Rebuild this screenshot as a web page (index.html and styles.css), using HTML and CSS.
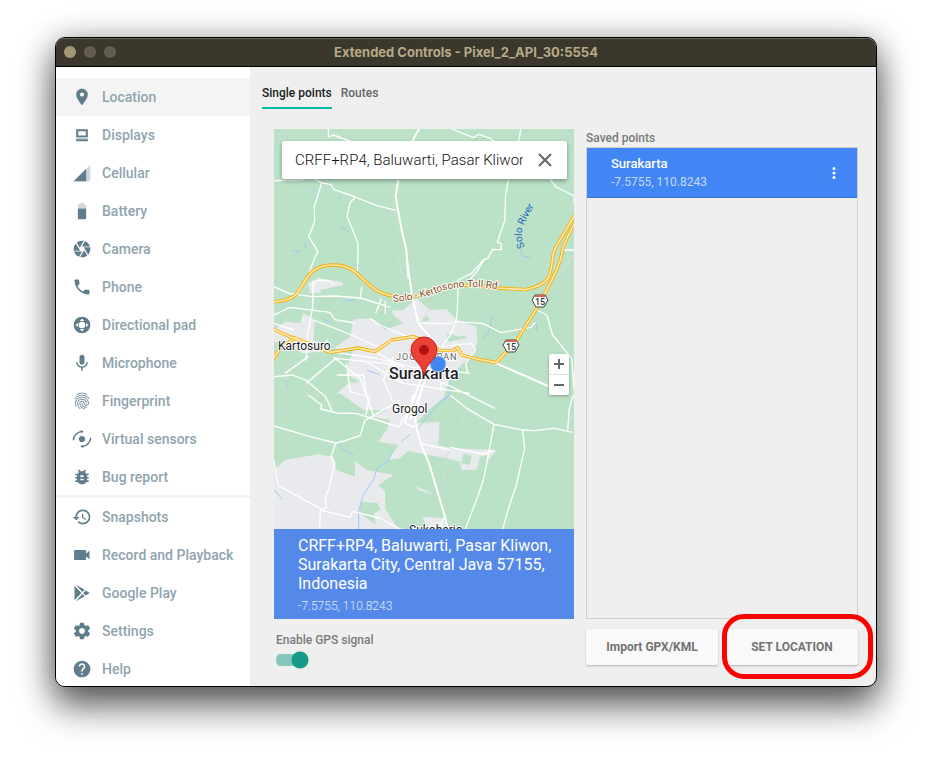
FILE: index.html
```html
<!DOCTYPE html>
<html lang="en">
<head>
<meta charset="utf-8">
<meta name="viewport" content="width=device-width, initial-scale=1">
<title>Extended Controls</title>
<link rel="stylesheet" href="styles.css">
</head>
<body>
<div class="window">
  <header class="titlebar">
    <span class="lights"><i class="light light-close"></i><i class="light"></i><i class="light"></i></span>
    <h1>Extended Controls - Pixel_2_API_30:5554</h1>
  </header>
  <div class="content">
    <nav class="sidebar">
      <ul>
        <li><a class="active" href="#"><svg viewBox="0 0 24 24"><path d="M12 2C8.13 2 5 5.13 5 9c0 5.25 7 13 7 13s7-7.75 7-13c0-3.87-3.13-7-7-7zm0 9.5c-1.38 0-2.5-1.12-2.5-2.5s1.12-2.5 2.5-2.5 2.5 1.12 2.5 2.5-1.12 2.5-2.5 2.5z"/></svg>Location</a></li>
        <li><a href="#"><svg viewBox="0 0 24 24"><path d="M5 5h14v9.500H5zM7.500 7.500v5h9v-5z" fill-rule="evenodd"/><path d="M5 14.500h14V17H5z" opacity=".4"/><path d="M5 17h14v2.500H5z"/></svg>Displays</a></li>
        <li><a href="#"><svg viewBox="0 0 24 24"><path d="M2 22h20V2z" opacity=".3"/><path d="M17 7L2 22h15z"/></svg>Cellular</a></li>
        <li><a href="#"><svg viewBox="0 0 24 24"><path d="M17 5.330C17 4.600 16.400 4 15.670 4H14V2h-4v2H8.330C7.600 4 7 4.600 7 5.330V9h10z" opacity=".3"/><path d="M7 9v11.670C7 21.400 7.600 22 8.330 22h7.330c.740 0 1.340-.600 1.340-1.330V9z"/></svg>Battery</a></li>
        <li><a href="#"><svg viewBox="0 0 24 24"><path d="M9.400 10.500l4.770-8.260C13.470 2.090 12.750 2 12 2c-2.400 0-4.600.850-6.320 2.250l3.660 6.350.060-.100zM21.540 9c-.920-2.920-3.150-5.260-6-6.340L11.880 9h9.660zm.260 1h-7.490l.290.500 4.760 8.250C21 16.970 22 14.610 22 12c0-.690-.070-1.350-.200-2zM8.540 12l-3.900-6.750C3.010 7.030 2 9.390 2 12c0 .690.070 1.350.200 2h7.490l-1.150-2zm-6.080 3c.920 2.920 3.150 5.260 6 6.340L12.120 15H2.460zm11.270 0l-3.900 6.760c.700.150 1.420.240 2.170.240 2.400 0 4.600-.850 6.320-2.250l-3.660-6.350-.930 1.600z"/></svg>Camera</a></li>
        <li><a href="#"><svg viewBox="0 0 24 24"><path d="M6.620 10.790c1.440 2.830 3.760 5.140 6.590 6.590l2.200-2.200c.270-.270.670-.360 1.020-.240 1.120.370 2.330.570 3.570.570.550 0 1 .450 1 1V20c0 .550-.450 1-1 1-9.390 0-17-7.610-17-17 0-.550.450-1 1-1h3.500c.550 0 1 .450 1 1 0 1.250.200 2.450.570 3.570.110.350.030.740-.250 1.020l-2.200 2.200z"/></svg>Phone</a></li>
        <li><a href="#"><svg viewBox="0 0 24 24"><path fill-rule="evenodd" d="M12 2a10 10 0 1 0 0 20 10 10 0 0 0 0-20zm0 2.200l2.500 3h-5zM4.200 12l3-2.500v5zM19.800 12l-3 2.500v-5zM12 19.800l-2.500-3h5zM12 8a4 4 0 1 1 0 8 4 4 0 0 1 0-8z"/></svg>Directional pad</a></li>
        <li><a href="#"><svg viewBox="0 0 24 24"><path d="M12 14c1.660 0 2.990-1.340 2.990-3L15 5c0-1.660-1.340-3-3-3S9 3.340 9 5v6c0 1.660 1.340 3 3 3zm5.300-3c0 3-2.540 5.100-5.300 5.100S6.700 14 6.700 11H5c0 3.410 2.720 6.230 6 6.720V21h2v-3.280c3.280-.480 6-3.300 6-6.720h-1.700z"/></svg>Microphone</a></li>
        <li><a href="#"><svg viewBox="0 0 24 24"><path d="M17.81 4.47c-.08 0-.16-.02-.23-.06C15.66 3.42 14 3 12.01 3c-1.98 0-3.86.47-5.57 1.41-.24.13-.54.04-.68-.2-.13-.24-.04-.55.2-.68C7.82 2.52 9.86 2 12.01 2c2.13 0 3.99.47 6.03 1.52.25.13.34.43.21.67-.09.18-.26.28-.44.28zM3.5 9.72c-.1 0-.2-.03-.29-.09-.23-.16-.28-.47-.12-.7.99-1.4 2.25-2.5 3.75-3.27C9.98 4.04 14 4.03 17.15 5.65c1.5.77 2.76 1.86 3.75 3.25.16.22.11.54-.12.7-.23.16-.54.11-.7-.12-.9-1.26-2.04-2.25-3.39-2.94-2.87-1.47-6.54-1.47-9.4.01-1.36.7-2.5 1.7-3.4 2.96-.08.14-.23.21-.39.21zm6.25 12.07c-.13 0-.26-.05-.35-.15-.87-.87-1.34-1.43-2.01-2.64-.69-1.23-1.05-2.73-1.05-4.34 0-2.97 2.54-5.39 5.66-5.39s5.66 2.42 5.66 5.39c0 .28-.22.5-.5.5s-.5-.22-.5-.5c0-2.42-2.09-4.39-4.66-4.39-2.57 0-4.66 1.97-4.66 4.39 0 1.44.32 2.77.93 3.85.64 1.15 1.08 1.64 1.85 2.42.19.2.19.51 0 .71-.11.1-.24.15-.37.15zm7.17-1.85c-1.19 0-2.24-.3-3.1-.89-1.49-1.01-2.38-2.65-2.38-4.39 0-.28.22-.5.5-.5s.5.22.5.5c0 1.41.72 2.74 1.94 3.56.71.48 1.54.71 2.54.71.24 0 .64-.03 1.04-.1.27-.05.53.13.58.41.05.27-.13.53-.41.58-.57.11-1.07.12-1.21.12zM14.91 22c-.04 0-.09-.01-.13-.02-1.59-.44-2.63-1.03-3.72-2.1-1.4-1.39-2.17-3.24-2.17-5.22 0-1.62 1.38-2.94 3.08-2.94 1.7 0 3.08 1.32 3.08 2.94 0 1.07.93 1.94 2.08 1.94s2.08-.87 2.08-1.94c0-3.77-3.25-6.83-7.25-6.83-2.84 0-5.44 1.58-6.61 4.03-.39.81-.59 1.76-.59 2.8 0 .78.07 2.01.67 3.61.1.26-.03.55-.29.64-.26.1-.55-.04-.64-.29-.49-1.31-.73-2.61-.73-3.96 0-1.2.23-2.29.68-3.24 1.33-2.79 4.28-4.6 7.51-4.6 4.55 0 8.25 3.51 8.25 7.83 0 1.62-1.38 2.94-3.08 2.94s-3.08-1.32-3.08-2.94c0-1.07-.93-1.94-2.08-1.94s-2.08.87-2.08 1.94c0 1.71.66 3.31 1.87 4.51.95.94 1.86 1.46 3.27 1.85.27.07.42.35.35.61-.05.23-.26.38-.47.38z"/></svg>Fingerprint</a></li>
        <li><a href="#"><svg viewBox="0 0 24 24"><circle cx="12" cy="12" r="3.700"/><path d="M1.500 13.500C2 8 6 3.500 12 3M22.500 10.500C22 16 18 20.500 12 21" fill="none" stroke="currentColor" stroke-width="1.800"/><path d="M10 1.500l4 1-2 2.700zM14 22.500l-4-1 2-2.700z"/></svg>Virtual sensors</a></li>
        <li><a href="#"><svg viewBox="0 0 24 24"><path d="M20 8h-2.810c-.450-.780-1.070-1.450-1.820-1.960L17 4.410 15.590 3l-2.170 2.170C12.960 5.060 12.490 5 12 5c-.490 0-.960.060-1.410.170L8.410 3 7 4.410l1.620 1.630C7.880 6.550 7.260 7.220 6.810 8H4v2h2.090c-.050.330-.090.660-.090 1v1H4v2h2v1c0 .340.040.670.090 1H4v2h2.810c1.040 1.790 2.970 3 5.190 3s4.150-1.210 5.190-3H20v-2h-2.090c.050-.330.090-.660.090-1v-1h2v-2h-2v-1c0-.340-.040-.670-.090-1H20V8zm-6 8h-4v-2h4v2zm0-4h-4v-2h4v2z"/></svg>Bug report</a></li>
      </ul>
      <ul class="secondary">
        <li><a href="#"><svg viewBox="0 0 24 24"><path d="M13 3c-4.970 0-9 4.030-9 9H1l3.890 3.890.070.140L9 12H6c0-3.870 3.130-7 7-7s7 3.130 7 7-3.130 7-7 7c-1.930 0-3.680-.790-4.940-2.060l-1.420 1.420C8.270 19.990 10.510 21 13 21c4.970 0 9-4.030 9-9s-4.030-9-9-9zm-1 5v5l4.280 2.540.720-1.210-3.500-2.080V8H12z"/></svg>Snapshots</a></li>
        <li><a href="#"><svg viewBox="0 0 24 24"><path d="M17 10.500V7c0-.550-.450-1-1-1H3.500c-.550 0-1 .450-1 1v10c0 .550.450 1 1 1H16c.550 0 1-.450 1-1v-3.500l4 4v-11z"/></svg>Record and Playback</a></li>
        <li><a href="#"><svg viewBox="0 0 24 24"><path d="M3 3.200v17.600L11.300 12zM4.500 2.200l8 8.700 2.700-2.700zM4.500 21.800l8-8.700 2.700 2.700zM16.300 9L13.400 12l2.900 3 5-2.900z"/></svg>Google Play</a></li>
        <li><a href="#"><svg viewBox="0 0 24 24"><path d="M19.430 12.980c.040-.320.070-.640.070-.980s-.030-.660-.070-.980l2.110-1.650c.190-.150.240-.420.120-.640l-2-3.460c-.120-.220-.390-.300-.610-.220l-2.490 1c-.520-.400-1.080-.730-1.690-.980l-.380-2.650C14.460 2.180 14.250 2 14 2h-4c-.250 0-.460.180-.490.420l-.380 2.650c-.610.250-1.170.590-1.690.980l-2.490-1c-.230-.090-.490 0-.610.220l-2 3.460c-.130.220-.070.490.120.640l2.110 1.650c-.040.320-.070.650-.070.980s.030.660.070.980l-2.110 1.650c-.190.150-.240.420-.120.640l2 3.460c.120.220.390.300.610.220l2.490-1c.520.400 1.080.730 1.690.980l.380 2.650c.030.240.240.420.490.420h4c.250 0 .460-.180.490-.420l.380-2.650c.610-.250 1.170-.590 1.690-.980l2.490 1c.230.090.490 0 .610-.220l2-3.460c.120-.220.070-.490-.120-.640l-2.110-1.650zM12 15.500c-1.930 0-3.500-1.570-3.500-3.500s1.570-3.500 3.500-3.500 3.500 1.570 3.500 3.500-1.570 3.500-3.500 3.500z"/></svg>Settings</a></li>
        <li><a href="#"><svg viewBox="0 0 24 24"><path d="M12 2C6.480 2 2 6.480 2 12s4.480 10 10 10 10-4.480 10-10S17.520 2 12 2zm1 17h-2v-2h2v2zm2.070-7.750l-.900.920C13.450 12.900 13 13.500 13 15h-2v-.500c0-1.100.450-2.100 1.170-2.830l1.240-1.260c.370-.360.590-.860.590-1.410 0-1.100-.900-2-2-2s-2 .900-2 2H8c0-2.210 1.790-4 4-4s4 1.790 4 4c0 .880-.360 1.680-.930 2.250z"/></svg>Help</a></li>
      </ul>
    </nav>
    <main>
      <div class="tabs" role="tablist">
        <button class="tab selected" type="button" role="tab" aria-selected="true">Single points</button>
        <button class="tab" type="button" role="tab" aria-selected="false">Routes</button>
      </div>
      <div class="columns">
        <section class="left">
          <div class="map">
            <svg class="map-art" viewBox="0 0 300 400" preserveAspectRatio="xMidYMid slice">
              <defs>
                <path id="toll-line" d="M119 173Q145 171 165 163Q190 153 240 163"/>
                <path id="river-line" d="M251 118C243 103 250 92 268 66"/>
                <path id="toll" d="M0 126Q50 125 75 107Q90 90 110 54Q135 15 190 15Q230 14 260 39Q290 70 315 88Q360 118 440 108Q520 85 560 75Q620 75 680 84L765 89Q820 78 836 52Q845 25 850-20L858-40L915-135"/>
                <path id="toll-east" d="M679 308L742 238L800 145L830 90L858 34L871 0L880-40Q895-80 920-118"/>
                <path id="route" d="M0 203L60 230L90 240L180 277L265 264L315 275L365 240L430 230L480 250L510 271L550 272L563 263L575 285L620 297L679 308"/>
                <path id="spur" d="M5 305Q25 270 40 257L80 232"/>
              </defs>
              <path class="green" d="M0 0h300v400H0z"/>
              <g transform="scale(.333333)">
                <g class="town">
                  <path transform="translate(-12 393)" d="M365 152L400 150L440 115L480 150L530 148L560 180L620 200L622 250L600 290L560 330L530 380L520 410L440 420L440 450L280 450L210 400L200 400L235 370L270 365L235 345L235 315L250 270L190 265L240 230L250 178L305 174L345 210L400 190L370 165ZM12 210L45 185L90 190L100 160L135 180L130 240L180 265L160 275L95 280L60 255L12 245ZM115 70L145 55L215 65L220 75L150 90L155 98L120 98Z"/>
                  <path transform="translate(-12 798)" d="M180 0L310 0L315 20L370 8L430 0L530 0L470 50L438 85L508 80L505 150L545 160L680 165L655 195L650 180L630 185L620 225L575 225L570 200L530 190L415 168L390 190L355 195L385 150L325 140L350 105L360 75L305 65L370 38L365 15L300 0ZM12 225L45 195L145 178L190 185L200 225L255 245L255 198L290 225L370 240L325 270L345 290L345 340L380 395L410 405L12 405ZM440 273L495 300L445 285ZM455 365L520 370L530 405L480 405Z"/>
                </g>
                <g class="green">
                  <path transform="translate(-12 393)" d="M458 173l17-5 3 14-17 3zM530 220l40 10 15-5 5 10-55 10z"/>
                  <path transform="translate(-12 798)" d="M580 175l25 7-5 28-25-5zM272 320l50 4 10 20-20 10 5 35-48-35z"/>
                </g>
                <g class="water">
                  <path transform="translate(-12 -12)" d="M127 192l25 18M215 210l-6 14M208 302l28 20M68 377l25 2M108 356l-4 15M755 370l-3 10 5 12 25 6M255 420h20"/>
                  <path transform="translate(-12 393)" d="M158 177l30 12M220 121h35M800 190v22M665 168l-5 40-20 30M570 330l-30 25-2 50-15 15M43 360l12 22M290 330l40 15"/>
                  <path transform="translate(-12 798)" d="M540 0l-28 20-70 82M420 118l-25 22M370 163l-18 38-30 18-12 35-30 45-14 50v60M200 132l20 33 32 16M14 285l22 28"/>
                </g>
                <g class="minor">
                  <path transform="translate(-12 -12)" d="M380 260l2 130 20 70M915 385l-45 70"/>
                  <path transform="translate(-12 393)" d="M915-20L790 140M500 110l-45 75M80 400l150-130"/>
                  <path transform="translate(-12 798)" d="M12 68L115-2M540 0l52 40-60 140-18 110"/>
                </g>
                <g class="street">
                  <path transform="translate(-12 -12)" d="M174 0l2 36 14-6 60 22M545 12l65 26 16-10 35 12 40 30M752 12l-12 80-25 75-8 40-3 80-22 65 12 4v18l-26-1-15 28-10 1-20 35-25 28M12 167l80-2 60-20M130 160l25 14-22 70 1 45-18 46 28 45-10 18-15 42M155 174l28 5 8 14 65 23 65 26 57 14M256 216l-16 18-9 39 33 82-1 84M840 162l18 24 54 26v20M882 375h40"/>
                  <path transform="translate(-12 393)" d="M12 80l45 20 70 10 70-2 75 6 90 28M60 142L12 165M60 142l120 15 15 22 60 10M130 62l-2 80-15 80-5 80M125 75l20-15 40 4 5 12M335 115l-18 45M346 122v40M275 80l-4 34M130 180l115 45 90 40M12 190l60 20M640 0l-35 40-40 20-3 90-4 35M558 185l80 5 55 28 90-16 12-15M558 185l-20 45-23 30 90-10 12 20-30 40 5 28M447 190l95 1 15-8M300 175l30 20 90 38M175 240l-30 25M180 275l140 20 125 30M12 350l55-5 40 15 60 50 20 45M45 340l70-50M108 370l90-75 190 20M190 290l80 65 40 110M230 310l10 85 55 15M200 345h80l10 60M280 300l120 70 200 30M370 290l-30 70 40 90M315 275l100 55M440 320l160 20M460 340l95 45 120 60M505 310l10 80M800 150l30 15 18 60 57 70 8 100"/>
                  <path transform="translate(-12 798)" d="M115 0l40 30-3 12 50 12 60 2 30 10 95 30 10-18 20-35M300 0l-12 60M12 93l105 31 80 20 25-6 48-16 15-46 105-60M197 144l-15 45 12 13-15 70-14 40 5 25-20 7M12 196l12 75 127 70-2 55M151 345l90 22 7-18 80 20 65 35M430 0l-8 45M540 0l50 40 82 48 86 17 35 2 60-7 55 12M910 0l-12 40-5 65M672 88l-30 160-20 60-40 105M758 105l6 55-25 110-25 75-18 65M450 145l90 20M540 157l100 20 30-10M525 360l-15 40"/>
                </g>
                <g class="road">
                  <path transform="translate(-12 -12)" d="M448 10l-22 40M385 165l-8 50 6 35 12 65 14 60 6 85"/>
                  <path transform="translate(-12 393)" d="M410-10l5 40 12 80 18 80 65 75M679 310l155 68M470 350l-50 130M455 350l-35 100"/>
                  <path transform="translate(-12 798)" d="M455-20l-20 90 5 30 12 45 25 60 45 150 15 60M430 0l-25 85 30 12"/>
                </g>
                <g transform="translate(-12 393)">
                  <g class="casing"><use href="#route"/><use href="#spur"/><use href="#toll"/><use href="#toll-east"/></g>
                  <g class="core"><use href="#route"/><use href="#spur"/><use href="#toll"/><use href="#toll-east"/></g>
                </g>
              </g>
              <g class="shield">
                <path d="M261 166h10l3 5-4 7h-8l-4-7z"/><path class="shield-top" d="M261 166h10v2h-10z"/>
                <path d="M232 211h10l3 5-4 7h-8l-4-7z"/><path class="shield-top" d="M232 211h10v2h-10z"/>
              </g>
              <text class="shield-no" x="266" y="176">15</text>
              <text class="shield-no" x="237" y="221">15</text>
              <text class="toll-name"><textPath href="#toll-line">Solo - Kertosono Toll Rd</textPath></text>
              <text class="river-name"><textPath href="#river-line">Solo River</textPath></text>
              <text class="place" x="4" y="221">Kartosuro</text>
              <text class="place" x="118" y="284">Grogol</text>
              <text class="place" x="135" y="405">Sukoharjo</text>
              <text class="district" x="122" y="231">JOGOSURAN</text>
              <text class="city" x="115" y="250">Surakarta</text>
              <circle cx="164" cy="235" r="8" fill="#4285f4" stroke="#b9d0f2" stroke-width="1"/>
              <path d="M150 208a13 13 0 0 1 13 13c0 10-11 13-12 23q-1 3-2 0c-1-10-12-13-12-23a13 13 0 0 1 13-13z" fill="#ea4335" stroke="#c5221f" stroke-width="1"/>
              <circle cx="150" cy="221" r="5" fill="#b31412"/>
            </svg>
            <div class="search">
              <input type="text" aria-label="Search location" value="CRFF+RP4, Baluwarti, Pasar Kliwon, Surakarta City">
              <button type="button" aria-label="Clear"><svg viewBox="0 0 14 14"><path d="M1 1l12 12M13 1L1 13"/></svg></button>
            </div>
            <div class="zoom">
              <button type="button" aria-label="Zoom in"><svg viewBox="0 0 10 10"><path d="M0 5h10M5 0v10"/></svg></button>
              <button type="button" aria-label="Zoom out"><svg viewBox="0 0 10 10"><path d="M0 5h10"/></svg></button>
            </div>
          </div>
          <div class="address">
            <p>CRFF+RP4, Baluwarti, Pasar Kliwon, Surakarta City, Central Java 57155, Indonesia</p>
            <small>-7.5755, 110.8243</small>
          </div>
          <div class="gps">
            <label for="gps">Enable GPS signal</label>
            <input id="gps" type="checkbox" role="switch" checked>
          </div>
        </section>
        <section class="right">
          <h2>Saved points</h2>
          <ul class="points">
            <li>
              <div><strong>Surakarta</strong><span>-7.5755, 110.8243</span></div>
              <button type="button" aria-label="More"><svg viewBox="0 0 4 14"><circle cx="2" cy="2.500" r="1.500"/><circle cx="2" cy="7" r="1.500"/><circle cx="2" cy="11.500" r="1.500"/></svg></button>
            </li>
          </ul>
          <div class="actions">
            <button type="button">Import GPX/KML</button>
            <div class="marked"><button type="button">SET LOCATION</button></div>
          </div>
        </section>
      </div>
    </main>
  </div>
</div>
</body>
</html>
```
FILE: styles.css
```css
* { box-sizing: border-box; }
body {
  margin: 0;
  padding: 37px 55px 73px;
  background: #fff;
  font-family: Roboto, "Liberation Sans", sans-serif;
}
h1, h2, p, ul { margin: 0; padding: 0; }
ul { list-style: none; }
button { padding: 0; border: 0; background: none; font: inherit; color: inherit; }
svg { display: block; }

.window {
  display: flex;
  flex-direction: column;
  min-height: calc(100vh - 110px);
  border: 1px solid #000;
  border-radius: 10px;
  background: #efefef;
  overflow: hidden;
  box-shadow: 0 20px 36px rgba(0, 0, 0, .55), 0 4px 32px rgba(0, 0, 0, .35);
}
.titlebar {
  display: grid;
  grid-template-columns: 60px 1fr 60px;
  align-items: center;
  height: 29px;
  padding: 0 8px;
  background: #3c372c;
  border-bottom: 1px solid #000;
  box-shadow: inset 0 1px #686359;
}
.titlebar h1 {
  font: 700 13px/16px Inter, "Liberation Sans", sans-serif;
  text-align: center;
  color: #b6aa88;
}
.lights { display: flex; gap: 8px; }
.light { width: 12px; height: 12px; border-radius: 50%; background: #625c4e; }
.light-close { background: #a39775; }

.content { display: flex; flex: 1; }
.sidebar {
  flex: 0 0 194px;
  padding-top: 11px;
  background: #fff;
  overflow: hidden;
}
.sidebar a {
  display: flex;
  align-items: center;
  gap: 10px;
  height: 38px;
  padding-left: 16px;
  font-size: 14px;
  font-weight: 500;
  color: #90a4ae;
  text-decoration: none;
}
.sidebar a.active { background: #f4f4f4; }
.sidebar svg { width: 20px; height: 20px; color: #607d8b; fill: currentColor; }
.secondary { margin: -1px 0 -2px; border-top: 3px solid #f3f3f3; }

main { flex: 1; display: flex; flex-direction: column; min-width: 0; padding: 11px 18px 16px 12px; }
.tabs { display: flex; gap: 9px; }
.tab {
  height: 31px;
  border-bottom: 2px solid transparent;
  font-size: 12px;
  font-weight: 500;
  color: #666;
}
.tab.selected { color: #212121; border-color: #00bfa5; }
.columns {
  flex: 1;
  display: grid;
  grid-template-columns: 300fr 272fr;
  gap: 12px;
  padding: 20px 0 0 12px;
}
.left, .right { display: flex; flex-direction: column; min-width: 0; }

.map { position: relative; flex: 1 0 400px; overflow: hidden; }
.map-art { position: absolute; width: 100%; height: 100%; }
.green { fill: #bbe2c6; }
.town { fill: #e8eaed; }
.water, .minor, .street, .road, .casing, .core { fill: none; stroke-linejoin: round; }
.water { stroke: #a3c8f5; stroke-width: 3; }
.minor { stroke: #d5dcd8; stroke-width: 3; }
.street { stroke: #fff; stroke-width: 4; }
.road { stroke: #fff; stroke-width: 6; }
.casing { stroke: #f9ab00; stroke-width: 10; }
.core { stroke: #fee9ae; stroke-width: 5; }
.shield path { fill: #fff; stroke: #444; stroke-width: 1; }
.shield .shield-top { fill: #e06055; stroke: none; }
.shield-no { font-size: 9px; font-weight: 500; text-anchor: middle; fill: #333; }
.place, .city, .district, .toll-name, .river-name { paint-order: stroke; stroke: #fff; stroke-width: 2px; stroke-linejoin: round; }
.place { font-size: 12px; fill: #202124; }
.city { font-size: 16px; font-weight: 500; fill: #202124; }
.district { font-size: 9px; letter-spacing: 1px; fill: #5f6368; }
.toll-name { font-size: 10px; fill: #7b4a21; }
.river-name { font-size: 10px; fill: #1a62c4; stroke: none; }

.search {
  position: absolute;
  inset: 12px 7px auto 8px;
  display: flex;
  align-items: center;
  gap: 15px;
  height: 38px;
  padding: 0 15px 0 13px;
  border-radius: 2px;
  background: #fff;
  box-shadow: 0 2px 4px rgba(0, 0, 0, .35);
}
.search input {
  flex: 1;
  min-width: 0;
  padding: 0;
  border: 0;
  background: none;
  font: 300 15px/24px Roboto, sans-serif;
  color: #111;
}
.search svg { width: 14px; height: 14px; stroke: #666; stroke-width: 2; }
.zoom {
  position: absolute;
  right: 5px;
  bottom: 134px;
  width: 20px;
  border-radius: 2px;
  background: #fff;
  box-shadow: 0 1px 3px rgba(0, 0, 0, .3);
}
.zoom button { display: grid; place-items: center; width: 20px; height: 20px; }
.zoom button + button { height: 21px; border-top: 1px solid #e0e0e0; }
.zoom svg { width: 10px; height: 10px; stroke: #666; stroke-width: 2; }

.address { height: 90px; padding: 7px 20px 0 24px; background: #5489ea; color: #fff; }
.address p { font-size: 16px; line-height: 19px; }
.address small { display: block; margin-top: 6px; font-size: 12px; font-weight: 300; line-height: 14px; color: #e3ecfc; }

.gps { height: 51px; padding: 13px 0 0 2px; font-size: 12px; font-weight: 500; line-height: 16px; color: #7a7a7a; }
.gps label { display: block; }
.gps input {
  appearance: none;
  display: block;
  width: 33px;
  height: 18px;
  margin: 3px 0 0;
  border-radius: 9px;
  background:
    radial-gradient(circle at 24px 9px, #169b89 8px, transparent 9px),
    linear-gradient(#85c6bd, #85c6bd) 0 3px / 30px 12px no-repeat;
}

.right h2 { font-size: 12px; font-weight: 500; line-height: 18px; color: #7a7a7a; }
.points { flex: 1; border: 1px solid #d0d0d0; }
.points li {
  display: flex;
  align-items: center;
  justify-content: space-between;
  height: 50px;
  padding: 0 21px 0 24px;
  background: #4285f4;
  border-bottom: 1px solid #3a76dd;
  color: #fff;
}
.points strong { display: block; font-size: 13px; font-weight: 500; line-height: 19px; }
.points span { display: block; font-size: 12px; line-height: 18px; color: #c6dafc; }
.points svg { width: 4px; height: 14px; fill: #fff; }
.actions { display: grid; grid-template-columns: 1fr 1fr; gap: 8px; padding: 10px 0 5px; }
.actions button {
  width: 100%;
  height: 36px;
  border-radius: 2px;
  background: #f9f9f9;
  box-shadow: 0 1px 2px rgba(0, 0, 0, .25);
  font-size: 12px;
  font-weight: 700;
  color: #737373;
}
.marked { position: relative; }
.marked::after {
  content: "";
  position: absolute;
  inset: -15px -15px -14px -4px;
  border: 5px solid #f00;
  border-radius: 22px;
  pointer-events: none;
}
```
